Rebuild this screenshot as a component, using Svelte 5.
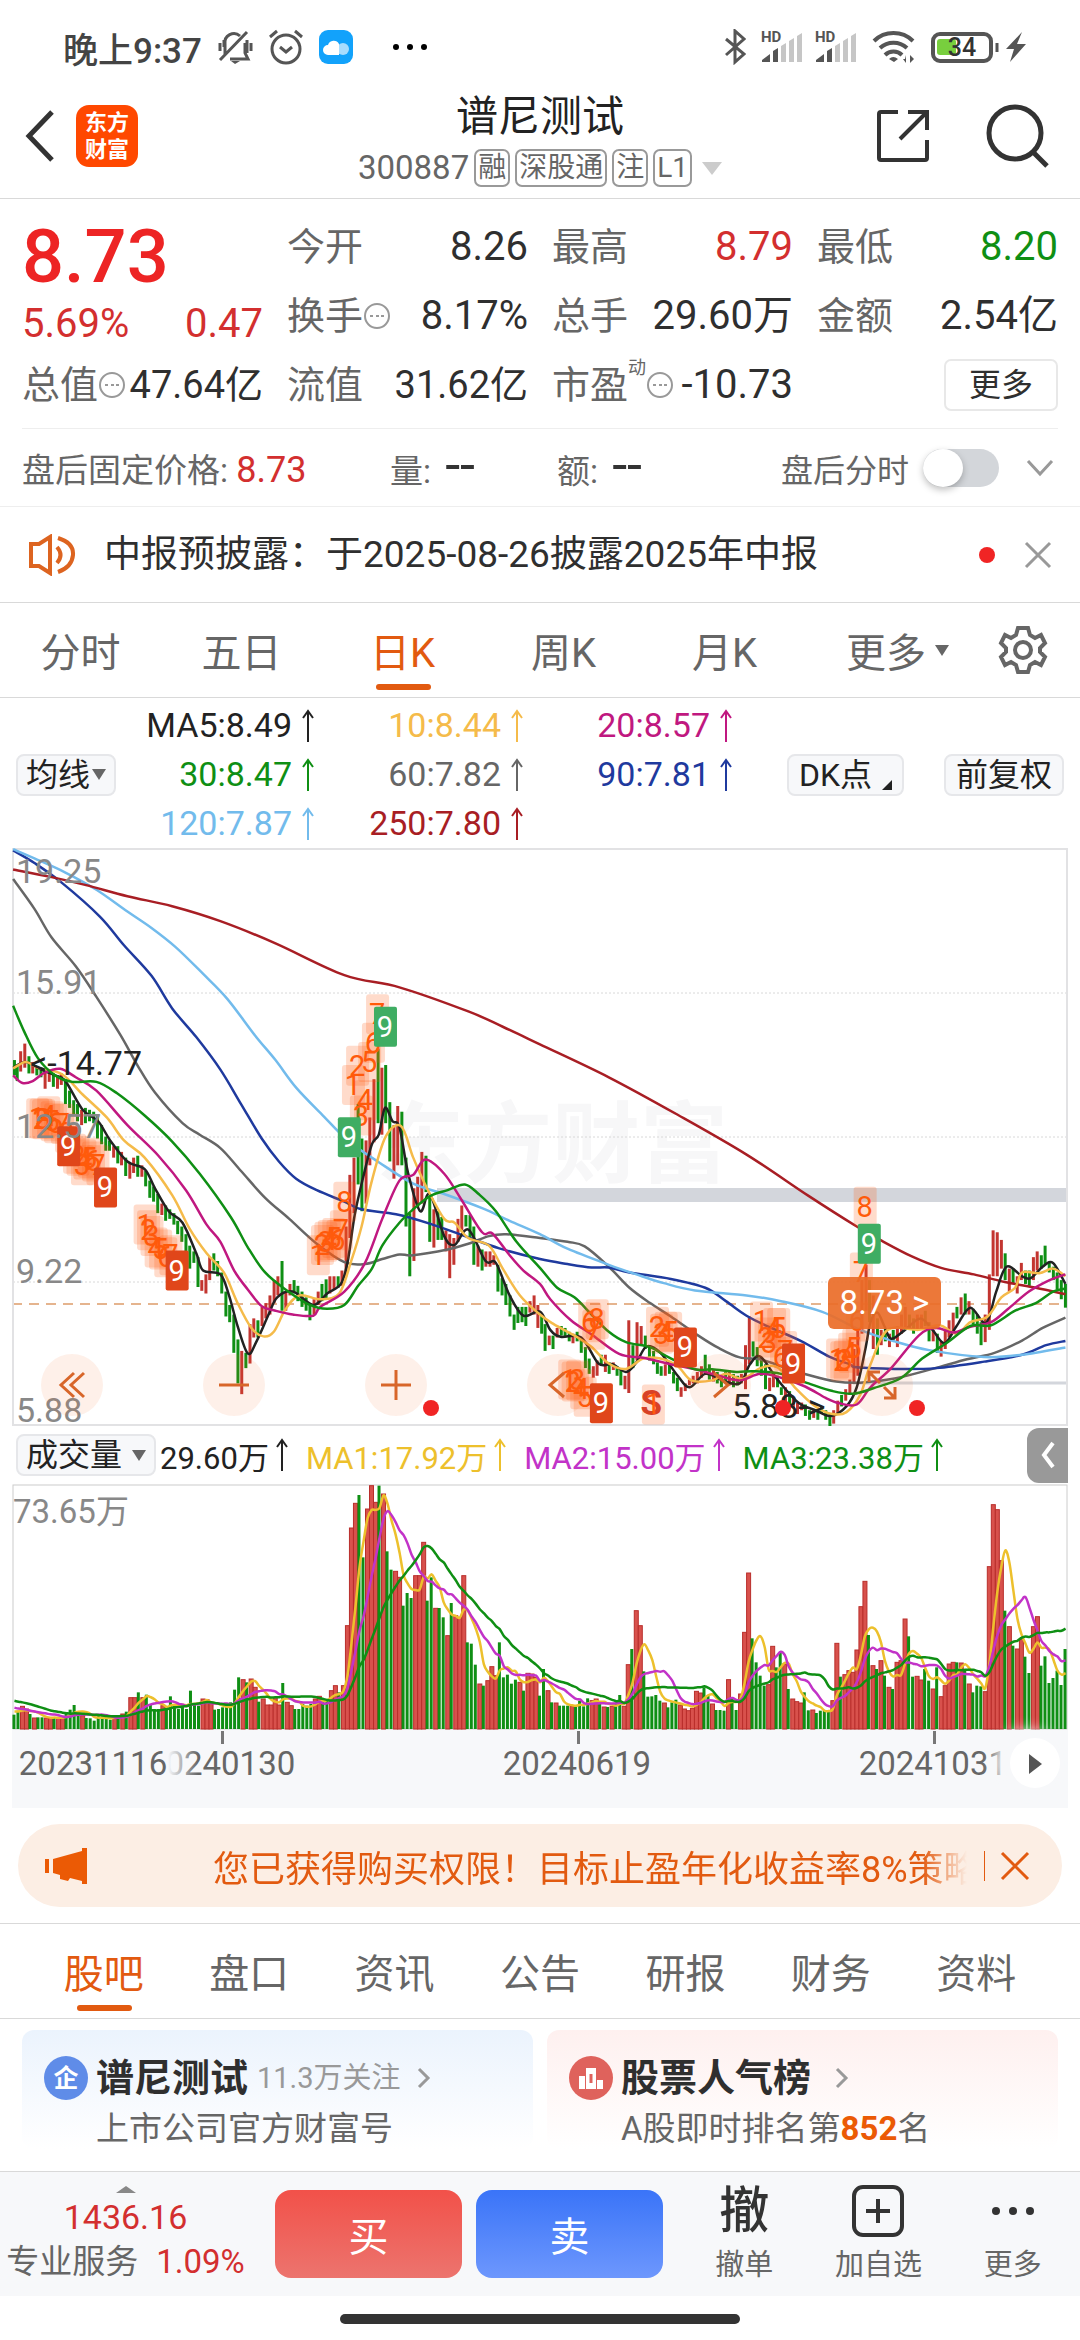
<script>
  const periods = ['分时', '五日', '日K', '周K', '月K'];
  let period = $state('日K');

  const sections = ['股吧', '盘口', '资讯', '公告', '研报', '财务', '资料'];
  let section = $state('股吧');

  let afterHours = $state(false);

  const averages = [
    { text: 'MA5:8.49', tone: 'black' },
    { text: '10:8.44', tone: 'yellow' },
    { text: '20:8.57', tone: 'magenta' },
    { text: '30:8.47', tone: 'green' },
    { text: '60:7.82', tone: 'gray' },
    { text: '90:7.81', tone: 'blue' },
    { text: '120:7.87', tone: 'sky' },
    { text: '250:7.80', tone: 'darkred' }
  ];

  const volumeStats = [
    { text: '29.60万', tone: 'black' },
    { text: 'MA1:17.92万', tone: 'gold' },
    { text: 'MA2:15.00万', tone: 'purple' },
    { text: 'MA3:23.38万', tone: 'green' }
  ];

  // plot grid units -> px
  const px = (u) => u / 2.904;
  const py = (v) => v / 2.613;
  const STEP = 11.65;

  // bar heights, negative = falling day
  const volumes = [
    -43, -55, 68, 60, -45, 33, -35, -35, 33, 33, -35, 33, 36, -45, -58, -72, -48, 40, -33, -32,
    -25, -40, -38, -30, -28, 33, -40, 45, -52, 94, 94, -110, 94, -103, -75, -60, -60, 70, -65, -98,
    -70, -60, -70, -60, -115, -72, -70, 90, 88, 80, -58, -60, -65, -70, -80, -118, -155, 148, -140, 150,
    125, -82, 90, 72, 72, 95, 72, -138, 80, 70, -60, -60, -75, -70, -75, 90, 98, -85, -85, 115,
    130, -110, 130, 310, 603, 677, -702, -515, 660, 730, 680, -730, 705, -533, -478, 473, 455, -370, -408, -393,
    460, 460, 560, -385, -455, 362, -363, -335, 280, -378, 340, 335, 460, -260, -256, -193, 135, -130, 145, 187,
    160, -260, -155, -163, -136, -148, 140, -115, 167, 165, 155, -100, -180, 115, -80, 78, -70, -70, -70, 68,
    -70, -85, -68, -92, 85, 90, -75, 66, -66, 68, -75, -102, 68, 193, -240, 355, 310, -173, -97, -98,
    -102, -85, 78, -65, -80, -88, 72, 60, 55, 62, 113, 108, -125, -100, 75, -57, -57, -55, 148, -90,
    -57, 105, 290, 468, -272, -200, -160, -130, 133, 248, -185, -230, 195, -120, 90, 82, 78, -110, -56, 57,
    -48, -55, -55, -55, 85, 257, -157, 163, 175, 170, 237, 367, 443, -282, 190, -180, 205, -160, 125, -120,
    200, 205, 330, -278, -157, 158, 147, -180, -145, 120, -185, 97, 130, 195, 200, -200, 198, -180, 135, -110,
    -130, -128, 112, 487, 673, 658, 505, -355, 307, -250, 240, 270, -217, -168, 307, 337, -190, -218, -138, -153,
    -175, -132, -240
  ];
  const history = [...Array(10).fill(108), ...Array(5).fill(80), ...Array(5).fill(55)];

  function volumeAverage(n) {
    const all = [...history, ...volumes.map(Math.abs)];
    return volumes.map((_, i) => {
      const end = i + history.length + 1;
      const sum = all.slice(end - n, end).reduce((a, b) => a + b, 0);
      return [px(42 + i * STEP), 245 - sum / n / 3];
    });
  }

  // x, high, low
  const candles = [
    42,575,615, 50,590,630, 60,552,605, 72,532,595, 84,565,610, 95,580,610, 107,590,615, 119,595,620, 131,605,650,
    143,600,632, 155,610,645, 167,615,650, 178,610,640, 190,625,690, 202,655,700, 214,680,720, 225,690,735,
    237,705,745, 248,700,740, 260,705,735, 272,710,740, 283,720,780, 295,745,795, 307,775,812, 318,785,812,
    330,800,830, 342,800,845, 353,815,850, 365,830,878, 377,845,885, 388,830,870, 400,825,880, 412,850,880,
    423,865,905, 435,890,935, 446,905,945, 458,925,975, 470,950,980, 481,955,995, 493,965,990, 505,975,1005,
    516,995,1030, 528,1010,1050, 540,1030,1085, 551,1060,1120, 563,1075,1105, 575,1090,1168, 586,1150,1178,
    598,1135,1185, 609,1090,1150, 621,1080,1125, 632,1100,1140, 644,1130,1185, 656,1180,1245, 667,1215,1260,
    679,1240,1340, 691,1305,1420, 702,1335,1448, 714,1340,1380, 726,1265,1368, 737,1250,1300, 749,1255,1300,
    761,1220,1270, 772,1210,1250, 784,1190,1240, 796,1150,1210, 807,1140,1190, 819,1100,1230, 830,1180,1230,
    842,1160,1190, 854,1150,1185, 865,1165,1205, 877,1180,1220, 889,1195,1230, 900,1210,1255, 912,1200,1240,
    924,1180,1215, 935,1160,1205, 947,1148,1200, 958,1140,1185, 970,1140,1175, 982,1140,1170, 993,1125,1165,
    1005,1010,1140, 1016,875,1040, 1028,830,975, 1040,690,900, 1051,780,970, 1063,785,950, 1074,725,850,
    1086,625,790, 1098,545,740, 1109,595,770, 1120,588,740, 1132,685,840, 1144,745,885, 1155,695,850,
    1167,710,850, 1179,830,1010, 1190,975,1140, 1202,910,1100, 1213,880,960, 1225,815,950, 1237,825,920,
    1248,930,1050, 1260,965,1065, 1272,970,1045, 1283,985,1045, 1295,1020,1075, 1306,1030,1145, 1318,1040,1110,
    1330,990,1050, 1341,955,1020, 1353,980,1010, 1365,980,1040, 1376,1010,1110, 1388,1060,1115, 1400,1070,1125,
    1411,1075,1115, 1423,1075,1115, 1434,1085,1110, 1446,1110,1180, 1458,1145,1190, 1469,1160,1215,
    1481,1190,1245, 1493,1240,1280, 1504,1220,1262, 1516,1220,1260, 1527,1220,1270, 1539,1205,1235,
    1551,1190,1240, 1562,1215,1275, 1573,1240,1290, 1583,1265,1335, 1595,1295,1320, 1606,1295,1330,
    1618,1275,1300, 1630,1270,1295, 1641,1275,1300, 1653,1285,1310, 1664,1290,1315, 1676,1285,1310,
    1688,1305,1340, 1700,1325,1380, 1711,1355,1395, 1723,1375,1405, 1734,1360,1400, 1746,1345,1370,
    1758,1345,1390, 1769,1365,1395, 1781,1365,1385, 1792,1375,1400, 1803,1385,1425, 1815,1400,1435,
    1826,1255,1445, 1838,1320,1380, 1850,1260,1360, 1862,1270,1320, 1874,1295,1330, 1886,1320,1360,
    1898,1335,1370, 1909,1365,1395, 1920,1375,1400, 1932,1370,1400, 1944,1370,1395, 1956,1390,1420,
    1967,1405,1440, 1978,1430,1455, 1990,1420,1440, 2002,1410,1425, 2013,1400,1420, 2025,1390,1420,
    2037,1375,1405, 2048,1345,1390, 2060,1370,1410, 2072,1385,1415, 2083,1390,1420, 2095,1405,1430,
    2107,1390,1420, 2118,1385,1425, 2130,1395,1430, 2142,1400,1425, 2153,1395,1420, 2165,1320,1435,
    2176,1245,1370, 2187,1310,1350, 2199,1325,1375, 2211,1355,1400, 2223,1370,1435, 2235,1405,1440,
    2246,1390,1430, 2258,1400,1430, 2269,1430,1450, 2281,1430,1480, 2293,1440,1475, 2304,1460,1485,
    2316,1470,1500, 2328,1470,1490, 2339,1475,1505, 2351,1490,1515, 2363,1490,1510, 2375,1490,1515,
    2386,1480,1500, 2398,1490,1515, 2410,1500,1532, 2421,1490,1525, 2433,1465,1500, 2444,1450,1480,
    2456,1435,1465, 2468,1410,1450, 2480,1330,1420, 2491,1275,1400, 2503,1150,1290, 2515,1110,1230,
    2525,1150,1260, 2536,1190,1330, 2548,1250,1345, 2559,1280,1320, 2571,1275,1310, 2583,1290,1325,
    2594,1280,1310, 2606,1270,1325, 2618,1240,1290, 2629,1220,1280, 2641,1240,1280, 2653,1250,1290,
    2664,1240,1280, 2676,1240,1280, 2687,1230,1270, 2698,1260,1310, 2710,1280,1310, 2722,1290,1340,
    2733,1310,1350, 2745,1280,1330, 2756,1255,1300, 2768,1235,1290, 2779,1220,1250, 2791,1195,1240,
    2803,1185,1240, 2814,1205,1240, 2826,1225,1265, 2838,1240,1290, 2849,1260,1320, 2861,1240,1312,
    2873,1135,1280, 2884,1020,1140, 2896,1025,1140, 2908,1045,1120, 2919,1080,1150, 2931,1120,1180,
    2942,1120,1160, 2954,1140,1185, 2966,1105,1150, 2978,1125,1160, 2989,1125,1165, 3001,1090,1150,
    3012,1075,1125, 3024,1085,1120, 3035,1060,1110, 3047,1105,1130, 3059,1115,1150, 3070,1130,1175,
    3082,1150,1200, 3094,1160,1222
  ];
  const bars = [];
  for (let i = 0; i < candles.length; i += 3) {
    const day = Math.min(Math.round((candles[i] - 42) / STEP), volumes.length - 1);
    bars.push({ x: px(candles[i]), hi: py(candles[i + 1]), lo: py(candles[i + 2]), up: volumes[day] > 0 });
  }

  const priceLines = [
    { tone: 'gray', points: [38,102,100,180,150,255,220,330,280,410,350,510,400,590,450,660,530,740,580,770,640,805,700,865,770,935,840,990,920,1055,1000,1103,1060,1108,1110,1095,1160,1083,1200,1085,1300,1070,1360,1055,1420,1035,1470,1030,1568,1040,1648,1050,1698,1062,1768,1115,1828,1170,1888,1210,1948,1245,2028,1295,2088,1328,2148,1352,2208,1357,2268,1375,2348,1398,2428,1415,2498,1418,2598,1407,2708,1382,2808,1357,2888,1340,2968,1308,3028,1275,3094,1248] },
    { tone: 'blue', points: [38,27,100,60,180,112,290,200,360,275,440,355,500,440,570,515,640,600,700,690,760,780,810,840,860,885,920,915,1000,945,1050,965,1150,978,1250,1003,1350,1035,1450,1067,1568,1095,1648,1108,1718,1117,1768,1117,1828,1130,1948,1147,2048,1170,2108,1205,2168,1243,2228,1270,2328,1310,2408,1350,2468,1370,2488,1378,2598,1382,2718,1380,2858,1363,2968,1345,3038,1320,3094,1309] },
    { tone: 'sky', points: [38,24,100,48,190,85,280,130,370,187,440,230,510,280,590,350,660,415,740,510,800,575,860,647,940,722,1010,785,1100,842,1200,898,1290,925,1400,962,1480,995,1568,1030,1648,1068,1768,1110,1848,1135,1928,1158,2018,1177,2168,1190,2268,1205,2388,1233,2498,1280,2598,1310,2698,1333,2858,1351,2968,1345,3094,1326] },
    { tone: 'darkred', points: [38,77,150,97,250,118,370,147,500,173,640,212,800,270,1000,353,1160,385,1360,448,1460,488,1568,534,1768,620,1968,718,2168,822,2348,930,2488,1010,2556,1045,2648,1088,2733,1118,2828,1135,2918,1155,3008,1170,3094,1187] },
    { tone: 'black', points: [38,595,75,580,120,600,160,615,190,630,240,705,285,735,320,785,370,840,420,860,450,910,490,970,530,1000,570,1080,590,1125,640,1135,665,1190,690,1270,720,1342,745,1310,780,1240,805,1195,850,1180,910,1215,950,1185,990,1160,1010,1100,1030,980,1055,880,1080,795,1100,770,1118,700,1140,735,1160,750,1185,870,1220,970,1248,925,1290,1035,1320,1058,1360,1018,1410,1100,1440,1105,1480,1190,1520,1243,1568,1232,1598,1280,1628,1298,1688,1300,1738,1368,1778,1370,1818,1390,1848,1365,1878,1323,1918,1340,1968,1400,2003,1430,2048,1395,2098,1412,2148,1420,2178,1370,2208,1350,2258,1410,2318,1470,2368,1490,2413,1505,2458,1480,2488,1430,2513,1330,2528,1260,2548,1235,2568,1270,2588,1303,2628,1280,2673,1250,2708,1280,2743,1315,2778,1270,2818,1222,2863,1262,2893,1180,2923,1115,2968,1140,2993,1145,3028,1115,3058,1105,3094,1160] },
    { tone: 'yellow', points: [38,597,75,580,110,595,180,612,240,665,310,725,360,785,420,830,500,928,550,1015,600,1080,650,1130,690,1210,730,1275,765,1297,795,1285,830,1225,870,1190,930,1200,985,1185,1020,1100,1050,1010,1080,890,1120,775,1165,748,1200,830,1240,910,1290,990,1320,1000,1360,1040,1420,1060,1460,1120,1510,1190,1568,1240,1608,1265,1678,1300,1718,1325,1768,1368,1818,1382,1868,1355,1918,1355,1968,1375,2008,1412,2068,1412,2108,1395,2158,1408,2208,1380,2258,1378,2308,1430,2368,1480,2418,1500,2458,1495,2498,1450,2528,1370,2578,1280,2668,1280,2728,1268,2778,1290,2818,1260,2868,1245,2908,1195,2948,1170,2968,1130,3018,1132,3058,1120,3094,1140] },
    { tone: 'magenta', points: [38,615,65,635,95,630,130,608,175,598,220,620,280,655,370,745,460,825,540,915,600,1005,640,1050,680,1125,720,1175,760,1218,800,1230,850,1240,910,1243,930,1220,1000,1180,1060,1105,1110,990,1160,890,1200,875,1235,835,1290,872,1340,940,1400,1025,1430,1028,1480,1085,1520,1125,1568,1160,1598,1200,1658,1255,1718,1292,1798,1343,1868,1353,1938,1368,2028,1385,2088,1400,2148,1412,2208,1395,2268,1405,2338,1428,2398,1458,2438,1472,2488,1475,2528,1430,2588,1380,2668,1295,2718,1275,2768,1287,2818,1272,2878,1260,2928,1225,2988,1180,3048,1150,3094,1135] },
    { tone: 'green', points: [38,433,70,500,110,570,160,615,210,632,280,632,340,662,420,720,500,788,580,872,670,985,720,1065,770,1130,830,1175,900,1215,950,1225,1000,1215,1040,1165,1080,1120,1110,1060,1160,1000,1200,965,1250,930,1300,915,1350,900,1390,925,1440,970,1500,1050,1568,1118,1618,1170,1668,1195,1718,1240,1768,1285,1818,1312,1888,1325,1938,1350,2018,1383,2068,1383,2138,1390,2188,1388,2268,1395,2348,1420,2418,1440,2478,1447,2538,1432,2618,1405,2678,1355,2748,1315,2818,1270,2878,1268,2948,1230,3008,1210,3058,1180,3094,1172] }
  ];

  // Catmull-Rom through the points
  function curve(pts) {
    let d = `M${pts[0][0]} ${pts[0][1]}`;
    for (let i = 0; i < pts.length - 1; i++) {
      const a = pts[i - 1] || pts[i];
      const b = pts[i];
      const c = pts[i + 1];
      const e = pts[i + 2] || c;
      d += `C${b[0] + (c[0] - a[0]) / 6} ${b[1] + (c[1] - a[1]) / 6} ${c[0] - (e[0] - b[0]) / 6} ${c[1] - (e[1] - b[1]) / 6} ${c[0]} ${c[1]}`;
    }
    return d;
  }

  function pairs(flat) {
    const out = [];
    for (let i = 0; i < flat.length; i += 2) out.push([px(flat[i]), py(flat[i + 1])]);
    return out;
  }

  // nine-turn counts: x, y, digit
  const counts = [
    [108,727,1],[118,728,2],[125,730,3],[140,722,4],[150,735,5],[160,740,6],[180,742,7],[192,765,8],
    [215,820,1],[225,825,2],[238,850,3],[245,835,4],[258,830,5],[270,840,6],[283,850,7],
    [420,1005,1],[430,1020,2],[440,1035,3],[452,1065,4],[465,1070,5],[480,1090,6],[495,1085,7],
    [923,1085,1],[935,1058,2],[945,1050,3],[955,1045,4],[968,1040,5],[980,1045,6],[990,1020,7],[1000,945,8],
    [1025,640,1],[1037,590,2],[1048,720,3],[1060,680,4],[1072,580,5],[1083,530,6],[1095,455,7],
    [1653,1410,1],[1663,1415,2],[1676,1412,3],[1688,1435,4],[1698,1455,5],[1711,1260,6],[1723,1280,7],[1733,1252,8],
    [1896,1475,1],[1908,1272,2],[1920,1290,3],[1933,1285,4],[1946,1285,5],
    [2210,1258,1],[2223,1300,2],[2233,1315,3],[2248,1275,4],[2260,1275,5],[2268,1350,6],[2280,1335,7],
    [2431,1355,1],[2443,1362,2],[2453,1360,3],[2466,1340,4],[2478,1328,5],[2488,1258,6],[2500,1130,7],[2511,958,8]
  ];
  const nines = [
    [198,800,'r'],[305,908,'r'],[513,1125,'r'],[1989,1326,'r'],[2303,1368,'r'],[1745,1472,'r'],
    [1118,488,'g'],[1013,777,'g'],[2523,1055,'g']
  ];
  const priceLabels = [['19.25',112],['15.91',402],['12.57',778],['9.22',1157],['5.88',1522]];
  const tools = ['rewind', 'minus', 'plus', 'left', 'right', 'expand'];
</script>

{#snippet up()}
  <svg class="up" viewBox="0 0 14 34" aria-hidden="true"><path d="M7 33V2M2 9l5-7 5 7" /></svg>
{/snippet}

{#snippet hint()}
  <svg class="hint" viewBox="0 0 28 28" aria-hidden="true">
    <circle cx="14" cy="14" r="12" />
    <path d="M7 14h3M13 14h3M18 14h3" />
  </svg>
{/snippet}

{#snippet signal()}
  <svg class="signal" width="42" height="36" viewBox="0 0 42 36" aria-hidden="true">
    <text x="0" y="13">HD</text>
    <path class="on" d="M1 33v-2l8-6v8zM12 33V22l5-3v14z" />
    <path class="off" d="M20 33V17l5-3v19zM28 33V12l5-3v24zM36 33V7l5-3v29z" />
  </svg>
{/snippet}

<div class="page">
  <div class="status">
    <span class="clock">晚上9:37</span>
    <svg width="36" height="36" viewBox="0 0 36 36" class="sys">
      <path d="M8 25V15a9 9 0 0 1 15-8M28 14v10l3 6H13M3 31L30 3M3 14v8M7 11v7M30 11v13M34 14v8" />
      <path class="fill" d="M14 32h9l-5 3z" />
    </svg>
    <svg width="36" height="36" viewBox="0 0 36 36" class="sys">
      <circle cx="18" cy="20" r="14" /><path d="M12 18l6 5 6-5M2 8l7-6M34 8l-7-6" />
    </svg>
    <svg width="34" height="34" viewBox="0 0 34 34">
      <rect width="34" height="34" rx="9" fill="#12a2fb" />
      <circle cx="24" cy="19" r="6" fill="#a9dcfd" />
      <path d="M9 25a5 5 0 0 1 0-10 6 6 0 0 1 11-1v11z" fill="#fff" />
    </svg>
    <svg class="dots" width="36" height="8" viewBox="0 0 36 8"><circle cx="4" cy="4" r="3" /><circle cx="18" cy="4" r="3" /><circle cx="32" cy="4" r="3" /></svg>
    <span class="grow"></span>
    <svg width="22" height="36" viewBox="0 0 22 36" class="sys"><path d="M2 10l18 15-9 8V2l9 8L2 26" /></svg>
    {@render signal()}
    {@render signal()}
    <svg width="44" height="36" viewBox="0 0 44 36" class="wifi">
      <path d="M2 12a28 28 0 0 1 39 0M8 19a20 20 0 0 1 27 0M13 26a12 12 0 0 1 17 0" />
      <path class="fill" d="M17 30q4-4 9 0l-4 3zM34 26v8l-3-4h2M38 34v-8l4 4" />
    </svg>
    <svg width="68" height="32" viewBox="0 0 68 32" class="battery">
      <rect x="6" y="8" width="19" height="16" rx="3" fill="#78cf3e" />
      <rect x="2" y="3" width="58" height="27" rx="7" fill="none" stroke="#555" stroke-width="4" />
      <path d="M66 12v9" stroke="#555" stroke-width="3" />
      <text x="31" y="25" text-anchor="middle">34</text>
    </svg>
    <svg width="20" height="30" viewBox="0 0 20 30" class="bolt"><path d="M16 0L0 17h8L4 30l16-18h-9z" /></svg>
  </div>

  <header class="top">
    <div class="side">
      <button class="icon" aria-label="返回">
        <svg width="30" height="52" viewBox="0 0 30 52"><path d="M28 2L5 26l23 24" /></svg>
      </button>
      <a class="logo" href="#home"><span>东方</span><span>财富</span></a>
    </div>
    <div class="name">
      <h1>谱尼测试</h1>
      <div class="code">
        <span>300887</span>
        <span class="tag">融</span><span class="tag">深股通</span><span class="tag">注</span><span class="tag">L1</span>
        <i class="caret"></i>
      </div>
    </div>
    <div class="side end">
      <button class="icon share" aria-label="分享">
        <svg width="54" height="54" viewBox="0 0 54 54"><path d="M22 3H5a2 2 0 0 0-2 2v44a2 2 0 0 0 2 2h44a2 2 0 0 0 2-2V31M32 3h19v18M51 3L24 30" /></svg>
      </button>
      <button class="icon" aria-label="搜索">
        <svg width="64" height="64" viewBox="0 0 64 64"><circle cx="29" cy="29" r="26" /><path d="M47 48l14 14" /></svg>
      </button>
    </div>
  </header>

  <section class="quote">
    <div class="last">
      <strong>8.73</strong>
      <div class="cell red"><span>5.69%</span><span>0.47</span></div>
    </div>
    <div class="cell"><label for="open">今开</label><output id="open">8.26</output></div>
    <div class="cell"><label for="high">最高</label><output id="high" class="red">8.79</output></div>
    <div class="cell"><label for="low">最低</label><output id="low" class="fall">8.20</output></div>
    <div class="cell"><label for="turn">换手{@render hint()}</label><output id="turn">8.17%</output></div>
    <div class="cell"><label for="hands">总手</label><output id="hands">29.60万</output></div>
    <div class="cell"><label for="amount">金额</label><output id="amount">2.54亿</output></div>
    <div class="cell tight"><label for="cap">总值{@render hint()}</label><output id="cap">47.64亿</output></div>
    <div class="cell tight"><label for="float">流值</label><output id="float">31.62亿</output></div>
    <div class="cell"><label for="pe">市盈<sup>动</sup>{@render hint()}</label><output id="pe">-10.73</output></div>
    <div class="cell end"><button class="more">更多</button></div>
  </section>

  <section class="after">
    <span>盘后固定价格: <b class="red">8.73</b></span>
    <span>量: <b>--</b></span>
    <span>额: <b>--</b></span>
    <div class="switch">
      <label for="after">盘后分时</label>
      <input id="after" type="checkbox" bind:checked={afterHours} />
      <button class="icon" aria-label="展开">
        <svg width="28" height="18" viewBox="0 0 28 18" class="thin"><path d="M2 2l12 13L26 2" /></svg>
      </button>
    </div>
  </section>

  <section class="notice">
    <svg width="48" height="42" viewBox="0 0 48 42" class="speaker">
      <path d="M3 10h8L22 3v36l-11-7H3zM29 13q7 8 0 16M30 4q16 5 15 17t-15 17" />
    </svg>
    <p>中报预披露：于2025-08-26披露2025年中报</p>
    <i class="dot"></i>
    <button class="icon" aria-label="关闭">
      <svg width="28" height="28" viewBox="0 0 28 28" class="thin"><path d="M2 2l24 24M26 2L2 26" /></svg>
    </button>
  </section>

  <nav class="tabs periods">
    {#each periods as p}
      <button class:active={p === period} onclick={() => (period = p)}>{p}</button>
    {/each}
    <button class="wide">更多<i class="caret small"></i></button>
    <button class="gear" aria-label="设置">
      <svg width="50" height="50" viewBox="0 0 50 50">
        <path d="M20 3h10l2 7 5 3 6-3 4 8-5 5v4l5 5-4 8-6-3-5 3-2 7H20l-2-7-5-3-6 3-4-8 5-5v-4l-5-5 4-8 6 3 5-3z" />
        <circle cx="25" cy="25" r="8" />
      </svg>
    </button>
  </nav>

  <section class="ma">
    <button class="chip">均线<i class="caret small"></i></button>
    <div class="values">
      {#each averages as a}
        <span class={a.tone}>{a.text}{@render up()}</span>
      {/each}
    </div>
    <div class="modes">
      <button class="chip corner">DK点</button>
      <button class="chip">前复权</button>
    </div>
  </section>

  <section class="chart">
    <svg viewBox="12 8 1056 578">
      <text class="watermark" x="376" y="335">东方财富</text>
      <rect x="437" y="348" width="630" height="14" fill="#d3d6dc" />
      <path d="M853 543H1067" stroke="#d3d6dc" stroke-width="3" />
      <path class="grid" d="M13 153H1067M13 297H1067M13 442H1067" />
      <path d="M12 464H1067" stroke="#e5b48e" stroke-width="2" stroke-dasharray="10 7" />
      <rect x="13" y="9" width="1054" height="576" fill="none" stroke="#e2e2e4" stroke-width="2" />
      {#each bars as b}
        <path d="M{b.x} {b.hi}V{b.lo}" stroke={b.up ? '#c33530' : '#0f8f14'} stroke-width="3" />
      {/each}
      {#each priceLines as l}
        <path class="line {l.tone}" d={curve(pairs(l.points))} />
      {/each}
      <text class="sell" x={px(1891)} y={py(1503)}>S</text>
      {#each counts as [x, y, n]}
        <rect x={px(x) - 11} y={py(y) - 20} width="23" height="40" rx="3" fill="#ff5a14" fill-opacity=".22" />
        <text class="count" x={px(x)} y={py(y) + 10}>{n}</text>
      {/each}
      {#each nines as [x, y, c]}
        <rect x={px(x) - 11} y={py(y) - 20} width="23" height="40" rx="2" fill={c === 'r' ? '#e0461a' : '#3fad63'} />
        <text class="count nine" x={px(x)} y={py(y) + 10}>9</text>
      {/each}
      {#each priceLabels as [t, y]}
        <text class="scale" x="16" y={py(y)}>{t}</text>
      {/each}
      <text class="scale mark" x="30" y={py(615)}>&lt;-14.77</text>
      <text class="scale mark" x="732" y={py(1510)}>5.88-&gt;</text>
    </svg>
    <div class="tools">
      {#each tools as t}
        <button aria-label={t}>
          <svg width="32" height="32" viewBox="0 0 32 32">
            {#if t === 'rewind'}<path d="M18 4L5 16l13 12M28 4L15 16l13 12" />
            {:else if t === 'minus'}<path d="M1 16h30" />
            {:else if t === 'plus'}<path d="M1 16h30M16 1v30" />
            {:else if t === 'left'}<path d="M22 4L8 16l14 12" />
            {:else if t === 'right'}<path d="M10 4l14 12-14 12" />
            {:else}<path d="M14 14L3 3M3 13V3h11M18 18l11 11M29 18v11H18" />{/if}
          </svg>
          {#if t === 'plus' || t === 'expand'}<i class="dot badge"></i>{/if}
          {#if t === 'right'}<i class="dot badge far"></i>{/if}
        </button>
      {/each}
    </div>
    <button class="price">8.73 &gt;</button>
  </section>

  <section class="volume-bar">
    <button class="chip">成交量<i class="caret small"></i></button>
    {#each volumeStats as v}
      <span class={v.tone}>{v.text}{@render up()}</span>
    {/each}
    <button class="fold" aria-label="收起">
      <svg width="14" height="28" viewBox="0 0 14 28"><path d="M12 2L3 14l9 12" /></svg>
    </button>
  </section>

  <section class="volume">
    <svg viewBox="12 0 1056 246">
      <rect x="13" y="1" width="1054" height="244" fill="none" stroke="#ccc" />
      {#each volumes as v, i}
        {#if v > 0}
          <rect x={px(42 + i * STEP) - 2} y={245 - v / 3} width="4" height={v / 3} fill="#d8514c" stroke="#b92e2b" />
        {:else}
          <rect x={px(42 + i * STEP) - 2} y={245 + v / 3} width="3" height={-v / 3} fill="#0f8f14" />
        {/if}
      {/each}
      <path class="line gold" d={curve(volumeAverage(5))} />
      <path class="line purple" d={curve(volumeAverage(10))} />
      <path class="line green" d={curve(volumeAverage(20))} />
      <text class="scale" x="13" y="39">73.65万</text>
    </svg>
    <div class="axis">
      <span class="first">20231116</span>
      <span class="t1">20240130</span>
      <span class="t2">20240619</span>
      <span class="t3">20241031</span>
      <button class="play" aria-label="播放"><i></i></button>
    </div>
  </section>

  <section class="banner">
    <svg width="42" height="36" viewBox="0 0 42 36"><path d="M0 11h4v14H0zM8 11L37 3V0h5v36h-5v-3l-12-3-2 3-8-2v-4l-7-2z" /></svg>
    <a href="#plan">您已获得购买权限！目标止盈年化收益率8%策略</a>
    <button class="icon" aria-label="关闭">
      <svg width="30" height="30" viewBox="0 0 30 30"><path d="M2 2l26 26M28 2L2 28" /></svg>
    </button>
  </section>

  <nav class="tabs sections">
    {#each sections as s}
      <button class:active={s === section} onclick={() => (section = s)}>{s}</button>
    {/each}
  </nav>

  <section class="cards">
    <a class="card company" href="#company">
      <svg width="44" height="44" viewBox="0 0 44 44">
        <circle cx="22" cy="22" r="22" fill="#5f8ce8" />
        <text x="22" y="31" text-anchor="middle">企</text>
      </svg>
      <h2>谱尼测试</h2>
      <small>11.3万关注</small>
      <svg class="thin" width="14" height="22" viewBox="0 0 14 22"><path d="M2 2l9 9-9 9" /></svg>
      <p>上市公司官方财富号</p>
    </a>
    <a class="card rank" href="#rank">
      <svg width="44" height="44" viewBox="0 0 44 44">
        <circle cx="22" cy="22" r="22" fill="#df625c" />
        <path fill="#fff" d="M10 20h6v13h-6zM17 12h10v21H17zM28 24h6v9h-6z" />
        <path d="M22 18v9" stroke="#df625c" stroke-width="3" />
      </svg>
      <h2>股票人气榜</h2>
      <svg class="thin" width="14" height="22" viewBox="0 0 14 22"><path d="M2 2l9 9-9 9" /></svg>
      <p>A股即时排名第<b>852</b>名</p>
    </a>
  </section>

  <footer class="trade">
    <div class="index">
      <i class="caret rise"></i>
      <span class="red">1436.16</span>
      <div><span>专业服务</span><span class="red">1.09%</span></div>
    </div>
    <button class="buy">买</button>
    <button class="sellout">卖</button>
    <button class="act"><b>撤</b><span>撤单</span></button>
    <button class="act">
      <svg width="52" height="52" viewBox="0 0 52 52"><rect x="2" y="2" width="48" height="48" rx="9" /><path d="M14 26h24M26 14v24" /></svg>
      <span>加自选</span>
    </button>
    <button class="act">
      <svg width="52" height="52" viewBox="0 0 52 52" class="solid"><circle cx="9" cy="26" r="4" /><circle cx="26" cy="26" r="4" /><circle cx="43" cy="26" r="4" /></svg>
      <span>更多</span>
    </button>
  </footer>
  <div class="home"></div>
</div>

<style>
  :global(body) {
    margin: 0;
    background: #fff;
  }
  .page {
    font-family: Roboto, "Noto Sans CJK SC", sans-serif;
    color: #2f2f2f;
    overflow: hidden;
  }
  button {
    font: inherit;
    color: inherit;
    background: none;
    border: 0;
    padding: 0;
    cursor: pointer;
  }
  a {
    color: inherit;
    text-decoration: none;
  }
  h1, h2, p {
    margin: 0;
  }
  svg {
    display: block;
    flex: none;
  }
  .icon svg {
    fill: none;
    stroke: #333;
    stroke-width: 5;
  }
  .icon.share svg {
    stroke-width: 4;
  }
  svg.thin, .icon svg.thin {
    fill: none;
    stroke: #999;
    stroke-width: 3;
  }
  .grow {
    flex: 1;
  }
  .red {
    color: #d32f2f;
  }
  .fall {
    color: #0f8f14;
  }

  .black { color: #222; }
  .yellow { color: #f5bb4a; }
  .magenta { color: #c01880; }
  .green { color: #0f8f14; }
  .gray { color: #666; }
  .blue { color: #1f3a9e; }
  .sky { color: #72bbec; }
  .darkred { color: #a81e24; }
  .gold { color: #edc02c; }
  .purple { color: #c233c8; }

  .caret {
    display: inline-block;
    border: 10px solid transparent;
    border-top: 13px solid #ccc;
    border-bottom: 0;
  }
  .caret.small {
    border-width: 11px 7px 0;
    border-top-color: #666;
  }
  .dot {
    width: 16px;
    height: 16px;
    border-radius: 50%;
    background: #f02424;
  }

  .status {
    display: flex;
    align-items: center;
    gap: 15px;
    height: 88px;
    padding: 6px 54px 0 63px;
    box-sizing: border-box;
  }
  .clock {
    font-size: 35px;
    font-weight: 500;
    color: #444;
  }
  .sys, .wifi {
    fill: none;
    stroke: #555;
    stroke-width: 3;
  }
  .wifi {
    stroke-width: 4;
  }
  .sys .fill, .wifi .fill {
    fill: #555;
    stroke: none;
  }
  .dots {
    margin-left: 24px;
  }
  .signal text {
    font-size: 15px;
    font-weight: 700;
    fill: #555;
  }
  .signal .on { fill: #555; }
  .signal .off { fill: #c6c6c6; }
  .signal + .signal {
    margin-left: -3px;
  }
  .battery text {
    font-size: 25px;
    font-weight: 500;
    fill: #333;
  }
  .bolt {
    margin-left: -8px;
    fill: #555;
  }

  .top {
    display: flex;
    justify-content: space-between;
    align-items: flex-start;
    height: 110px;
    padding: 0 30px 0 24px;
    border-bottom: 1px solid #d9d9d9;
  }
  .side {
    display: flex;
    align-items: center;
    gap: 22px;
    width: 236px;
    height: 96px;
  }
  .side.end {
    justify-content: flex-end;
    gap: 56px;
    width: 230px;
  }
  .logo {
    display: flex;
    flex-direction: column;
    justify-content: center;
    align-items: center;
    width: 62px;
    height: 62px;
    border-radius: 13px;
    background: #ff4800;
    color: #fff;
    font-size: 22px;
    font-weight: 700;
    line-height: 27px;
  }
  .name {
    text-align: center;
  }
  h1 {
    font-size: 42px;
    font-weight: 400;
    line-height: 58px;
    color: #222;
  }
  .code {
    display: flex;
    align-items: center;
    justify-content: center;
    gap: 5px;
    font-size: 33px;
    line-height: 44px;
    color: #666;
  }
  .tag {
    padding: 0 2px;
    border: 2px solid #999;
    border-radius: 7px;
    font-size: 28px;
    line-height: 34px;
  }
  .code .caret {
    margin-left: 5px;
  }

  .quote {
    display: grid;
    grid-template-columns: repeat(4, 1fr);
    grid-auto-rows: 69px;
    column-gap: 24px;
    margin: 0 22px;
    padding: 13px 0 9px;
    border-bottom: 1px solid #eee;
  }
  .last {
    grid-row: span 2;
    padding-top: 5px;
  }
  .last strong {
    display: block;
    font-size: 74px;
    font-weight: 500;
    line-height: 80px;
    color: #ed2424;
  }
  .last .cell {
    height: 54px;
    font-size: 40px;
  }
  .cell {
    display: flex;
    align-items: center;
    justify-content: space-between;
    font-size: 40px;
    line-height: 54px;
    white-space: nowrap;
  }
  .cell.tight {
    font-size: 38px;
  }
  .cell label {
    display: flex;
    align-items: center;
    font-size: 38px;
    color: #666;
  }
  .cell.end {
    justify-content: flex-end;
  }
  .hint {
    width: 28px;
    height: 28px;
    fill: none;
    stroke: #999;
    stroke-width: 2;
  }
  .cell sup {
    align-self: flex-start;
    font-size: 18px;
    line-height: 20px;
    vertical-align: baseline;
  }
  .more {
    width: 114px;
    height: 52px;
    border: 2px solid #e8e8e8;
    border-radius: 7px;
    font-size: 32px;
    line-height: 44px;
  }

  .after {
    display: grid;
    grid-template-columns: 368fr 167fr 224fr 277fr;
    align-items: center;
    height: 77px;
    padding: 0 22px;
    border-bottom: 1px solid #eee;
    font-size: 33px;
    color: #666;
    white-space: nowrap;
  }
  .after b {
    font-size: 36px;
    font-weight: 400;
    color: #333;
  }
  .after b:not(.red) {
    margin-left: 6px;
    font-size: 54px;
    line-height: 44px;
  }
  .after b.red {
    color: #d32f2f;
  }
  .switch {
    display: flex;
    align-items: center;
    justify-content: space-between;
    padding-right: 4px;
    font-size: 32px;
  }
  .switch input {
    appearance: none;
    display: flex;
    width: 76px;
    height: 38px;
    margin: 0;
    border-radius: 19px;
    background: #d3d6da;
  }
  .switch input::before {
    content: "";
    width: 40px;
    height: 38px;
    border-radius: 50%;
    background: #fff;
    box-shadow: 0 3px 7px rgba(0, 0, 0, .25);
  }
  .switch input:checked {
    justify-content: flex-end;
    background: #e25a10;
  }
  .switch .icon {
    margin-left: 14px;
  }

  .notice {
    display: flex;
    align-items: center;
    height: 95px;
    padding: 0 28px;
    border-bottom: 1px solid #d9d9d9;
  }
  .speaker {
    fill: none;
    stroke: #dd6420;
    stroke-width: 4;
  }
  .notice p {
    flex: 1;
    margin-left: 28px;
    font-size: 37px;
    line-height: 50px;
  }
  .notice .icon {
    margin-left: 29px;
  }

  .tabs {
    display: flex;
    height: 94px;
    border-bottom: 1px solid #d9d9d9;
    font-size: 40px;
    color: #666;
  }
  .tabs button {
    position: relative;
    flex: 1;
  }
  .tabs .active {
    color: #e25a10;
  }
  .tabs .active::after {
    content: "";
    position: absolute;
    left: 50%;
    bottom: 7px;
    width: 55px;
    height: 6px;
    margin-left: -27px;
    border-radius: 3px;
    background: #e25a10;
  }
  .tabs .wide {
    display: flex;
    align-items: center;
    justify-content: center;
    gap: 9px;
    flex: 0 0 185px;
  }
  .tabs .gear {
    flex: 0 0 90px;
    padding-left: 8px;
  }
  .gear svg {
    fill: none;
    stroke: #666;
    stroke-width: 4;
  }
  .sections {
    padding: 0 31px;
    border-top: 1px solid #d9d9d9;
  }

  .chip {
    display: inline-flex;
    align-items: center;
    justify-content: center;
    height: 42px;
    padding: 0 8px;
    border: 2px solid #e6e7ea;
    border-radius: 8px;
    background: #f7f8fa;
    box-sizing: border-box;
    font-size: 32px;
    line-height: 38px;
    color: #222;
    white-space: nowrap;
  }
  .ma {
    display: flex;
    align-items: center;
    padding: 3px 16px 0;
  }
  .ma .chip .caret {
    margin-left: 2px;
  }
  .values {
    display: grid;
    grid-template-columns: 199px 209px 209px;
    font-size: 34px;
    line-height: 49px;
  }
  .values span, .volume-bar span {
    display: flex;
    align-items: center;
    justify-content: flex-end;
    gap: 9px;
  }
  .up {
    width: 14px;
    height: 34px;
    fill: none;
    stroke: currentColor;
    stroke-width: 2;
  }
  .modes {
    display: flex;
    gap: 40px;
    margin-left: auto;
  }
  .modes .chip {
    padding: 0 10px;
  }
  .corner {
    min-width: 117px;
  }
  .corner::after {
    content: "";
    align-self: flex-end;
    margin: 0 0 4px 10px;
    border: 5px solid #222;
    border-top-color: transparent;
    border-left-color: transparent;
  }

  .chart {
    position: relative;
    margin: 0 12px;
  }
  .chart > svg, .volume > svg {
    width: 100%;
  }
  .grid {
    stroke: #d8d8d8;
    stroke-dasharray: 2 2;
  }
  .line {
    fill: none;
    stroke: currentColor;
    stroke-width: 2.5;
  }
  .watermark {
    font-size: 88px;
    font-weight: 700;
    fill: #f7f7f8;
  }
  .scale {
    font-size: 34px;
    fill: #888;
  }
  .mark {
    fill: #222;
  }
  .count {
    font-size: 29px;
    fill: #ff5a0a;
    text-anchor: middle;
  }
  .count.nine {
    fill: #fff;
  }
  .sell {
    font-size: 35px;
    font-weight: 700;
    fill: #cc3a2e;
    text-anchor: middle;
  }
  .tools {
    position: absolute;
    left: 29px;
    bottom: 10px;
    display: flex;
    gap: 100px;
  }
  .tools button {
    position: relative;
    display: grid;
    place-items: center;
    width: 62px;
    height: 62px;
    border-radius: 50%;
    background: rgba(250, 110, 40, .1);
  }
  .tools svg {
    fill: none;
    stroke: #d8662a;
    stroke-width: 3;
  }
  .badge {
    position: absolute;
    right: -12px;
    bottom: 0;
  }
  .badge.far {
    right: -40px;
  }
  .price {
    position: absolute;
    right: 127px;
    top: 429px;
    width: 113px;
    height: 52px;
    border-radius: 6px;
    background: rgba(234, 108, 40, .92);
    color: #fff;
    font-size: 33px;
    line-height: 52px;
    white-space: nowrap;
  }

  .volume-bar {
    display: flex;
    align-items: center;
    height: 58px;
    padding: 0 0 0 16px;
    margin-right: 12px;
    font-size: 31px;
    white-space: nowrap;
  }
  .volume-bar span {
    gap: 6px;
    margin-right: 17px;
  }
  .volume-bar .chip {
    padding: 0 8px;
    gap: 10px;
    margin-right: 4px;
  }
  .fold {
    display: grid;
    place-items: center;
    width: 41px;
    height: 55px;
    margin-left: auto;
    border-radius: 12px 0 0 12px;
    background: #999;
  }
  .fold svg {
    fill: none;
    stroke: #fff;
    stroke-width: 4;
  }

  .volume {
    margin: 0 12px;
  }
  .volume .scale {
    font-size: 33px;
  }
  .axis {
    position: relative;
    height: 78px;
    background: #f7f8fa;
    font-size: 33px;
    line-height: 40px;
    color: #666;
  }
  .axis span {
    position: absolute;
    top: 14px;
    width: 150px;
    margin-left: -75px;
    text-align: center;
  }
  .axis span:not(.first)::before {
    content: "";
    position: absolute;
    left: 50%;
    top: -13px;
    width: 3px;
    height: 13px;
    background: #777;
  }
  .t1 { left: 19.8%; }
  .t2 { left: 53.5%; }
  .t3 { left: 87.2%; }
  .axis .first {
    z-index: 1;
    left: 6px;
    margin: 0;
    background: #f7f8fa;
  }
  .axis .first::after {
    content: "";
    position: absolute;
    left: 100%;
    width: 30px;
    height: 40px;
    background: linear-gradient(90deg, #f7f8fa, rgba(247, 248, 250, 0));
  }
  .play {
    position: absolute;
    right: 8px;
    top: 8px;
    width: 50px;
    height: 50px;
    border-radius: 50%;
    background: #fff;
    box-shadow: -8px 0 14px 8px #f7f8fa;
  }
  .play i {
    display: inline-block;
    border: 10px solid transparent;
    border-left: 13px solid #555;
    border-right: 0;
  }

  .banner {
    display: flex;
    align-items: center;
    height: 83px;
    margin: 16px 18px;
    padding: 0 32px 0 27px;
    border-radius: 42px;
    background: #fceee4;
    color: #e25a10;
    font-size: 36px;
  }
  .banner > svg {
    fill: #eb5a05;
  }
  .banner a {
    flex: 1;
    min-width: 0;
    margin: 0 17px 0 126px;
    overflow: hidden;
    white-space: nowrap;
    mask-image: linear-gradient(90deg, #000 94%, transparent);
  }
  .banner .icon {
    padding-left: 15px;
    border-left: 1px solid #e25a10;
  }
  .banner .icon svg {
    stroke: #e25a10;
    stroke-width: 3;
  }

  .cards {
    display: grid;
    grid-template-columns: 1fr 1fr;
    gap: 14px;
    padding: 11px 22px 22px;
  }
  .card {
    display: grid;
    grid-template-columns: 52px auto auto 1fr;
    align-items: center;
    padding: 21px 22px 0;
    border-radius: 12px;
    background: linear-gradient(#ebf3fd, #fff);
  }
  .card.rank {
    grid-template-columns: 52px auto 1fr;
    background: linear-gradient(#fef0ef, #fff);
  }
  .card text {
    font-size: 25px;
    font-weight: 700;
    fill: #fff;
  }
  h2 {
    font-size: 38px;
    font-weight: 700;
    line-height: 54px;
  }
  small {
    margin-left: 9px;
    font-size: 29px;
    line-height: 40px;
    color: #999;
  }
  .card svg.thin {
    margin-left: 16px;
  }
  .card.rank svg.thin {
    margin-left: 24px;
  }
  .card p {
    grid-column: 2 / -1;
    margin-top: 4px;
    font-size: 33px;
    line-height: 40px;
    color: #666;
  }
  .card p b {
    color: #eb5a05;
  }

  .trade {
    display: flex;
    align-items: center;
    gap: 14px;
    height: 124px;
    border-top: 1px solid #d9d9d9;
    background: #f7f8fa;
  }
  .index {
    display: flex;
    flex-direction: column;
    align-items: center;
    width: 261px;
    box-sizing: border-box;
    padding-right: 10px;
    font-size: 34px;
    line-height: 48px;
  }
  .index div {
    display: flex;
    gap: 18px;
    line-height: 42px;
    font-size: 33px;
    color: #666;
    white-space: nowrap;
  }
  .rise {
    border-top: 0;
    border-bottom: 7px solid #888;
  }
  .buy, .sellout {
    width: 187px;
    height: 88px;
    border-radius: 16px;
    color: #fff;
    font-size: 40px;
  }
  .buy {
    background: linear-gradient(#f25149, #ec746e);
  }
  .sellout {
    background: linear-gradient(#3a74f8, #6d97fd);
  }
  .act {
    display: flex;
    flex: 1;
    flex-direction: column;
    align-items: center;
    margin-right: -14px;
    font-size: 29px;
    line-height: 36px;
    color: #666;
  }
  .act:last-child {
    margin-right: 0;
  }
  .act b {
    font-size: 50px;
    font-weight: 500;
    line-height: 52px;
    color: #333;
  }
  .act svg {
    fill: none;
    stroke: #333;
    stroke-width: 4;
  }
  .act svg.solid {
    fill: #333;
    stroke: none;
  }
  .act span {
    margin-top: 10px;
  }
  .home {
    width: 37%;
    height: 10px;
    margin: 18px auto 14px;
    border-radius: 5px;
    background: #333;
  }
</style>
